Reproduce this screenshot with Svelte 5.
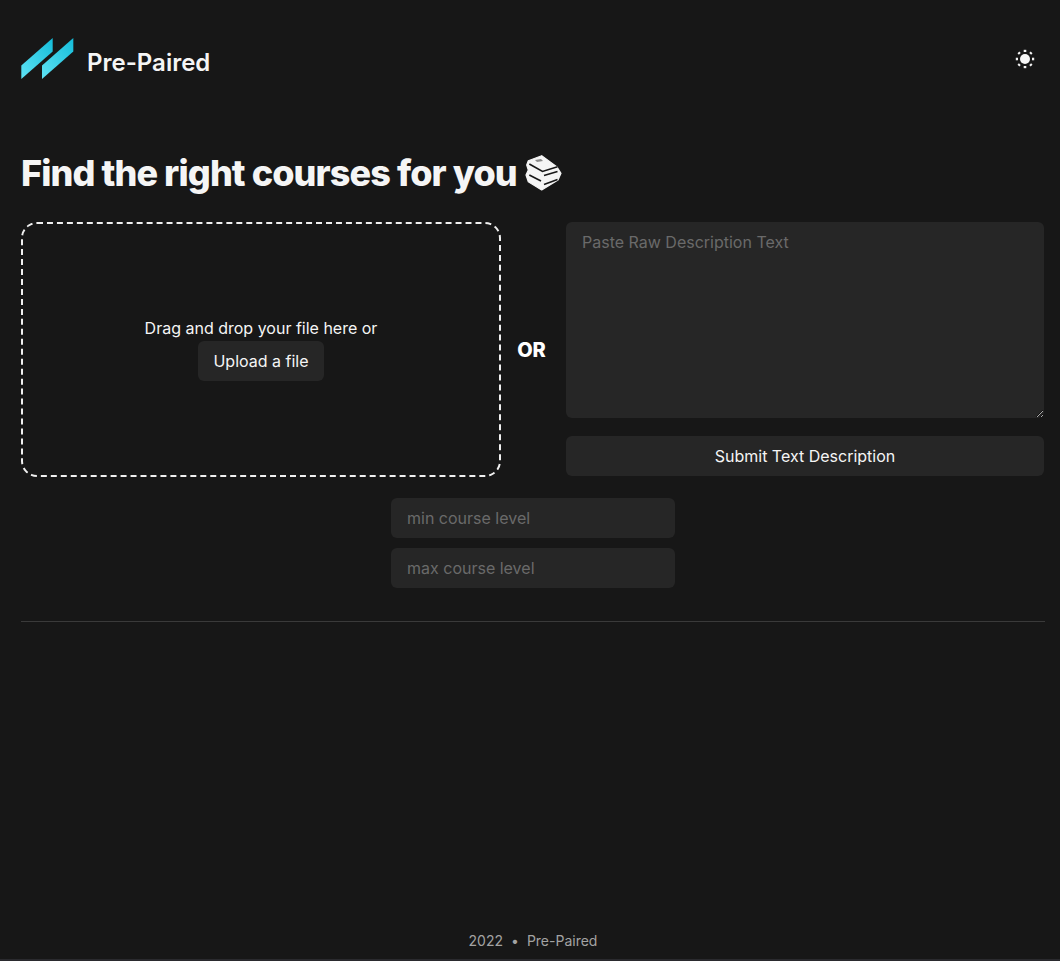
<script>
	let description = $state('');
	let minLevel = $state('');
	let maxLevel = $state('');
</script>

<div class="page">
	<header class="topbar">
		<div class="brand">
			<svg class="logo" width="53" height="42" viewBox="0 0 53 42" aria-hidden="true">
				<defs>
					<linearGradient id="logo-fill" x1="0" y1="1" x2="1" y2="0">
						<stop offset="0" stop-color="#5fe3f5" />
						<stop offset="1" stop-color="#14bcd9" />
					</linearGradient>
				</defs>
				<path d="M0.3 27.5 L31.7 0 V13.5 L0.3 41 Z" fill="url(#logo-fill)" />
				<path d="M21 27.5 L52.3 0 V13.5 L21 41 Z" fill="url(#logo-fill)" />
			</svg>
			<span class="brand-name">Pre-Paired</span>
		</div>
		<button class="theme-toggle" aria-label="Toggle color mode">
			<svg width="20" height="20" viewBox="0 0 20 20" aria-hidden="true">
				<circle cx="10" cy="10" r="5" fill="#f5f5f5" />
				<g stroke="#f5f5f5" stroke-width="2.6">
					<path d="M10 0.8 V3" />
					<path d="M10 17 V19.2" />
					<path d="M0.8 10 H3" />
					<path d="M17 10 H19.2" />
					<path d="M3.4 3.4 L4.8 4.8" />
					<path d="M15.2 15.2 L16.6 16.6" />
					<path d="M3.4 16.6 L4.8 15.2" />
					<path d="M15.2 4.8 L16.6 3.4" />
				</g>
			</svg>
		</button>
	</header>

	<main class="content">
		<h1>
			Find the right courses for you
			<svg class="books" width="36" height="36" viewBox="0 0 36 36" role="img" aria-label="books">
				<path
					d="M2.3 5.7 L15.7 0.7 L30.7 11.7 L35 18.3 L32 25 L15.7 35 L2.3 26.7 L0 20 L2.3 15 L0.7 10 Z"
					fill="#f5f5f5"
					stroke="#f5f5f5"
					stroke-width="1.2"
					stroke-linejoin="round"
				/>
				<g stroke="#171717" stroke-width="1.6" fill="none">
					<path d="M3.3 9 L16.5 16.5 L31.5 11.8" />
					<path d="M3.3 20 L15 26" />
					<path d="M18 20.5 L31.5 16.5" />
					<path d="M18 29.5 L31.5 24.5" />
				</g>
				<path d="M9 5 L15 4 L17 6 L11 7 Z" fill="#8a8a8a" />
			</svg>
		</h1>

		<div class="inputs">
			<div class="dropzone">
				<p>Drag and drop your file here or</p>
				<button class="btn upload">Upload a file</button>
			</div>
			<div class="or">OR</div>
			<div class="text-column">
				<textarea bind:value={description} placeholder="Paste Raw Description Text"></textarea>
				<button class="btn wide">Submit Text Description</button>
			</div>
		</div>

		<div class="levels">
			<input bind:value={minLevel} placeholder="min course level" />
			<input bind:value={maxLevel} placeholder="max course level" />
		</div>

		<hr />
	</main>

	<footer>
		<span>2022</span>
		<span class="dot">•</span>
		<span>Pre-Paired</span>
	</footer>
</div>

<style>
	:global(body) {
		margin: 0;
		background: #171717;
	}

	.page {
		box-sizing: border-box;
		height: 961px;
		padding: 0 15px 0 21px;
		display: flex;
		flex-direction: column;
		font-family: Inter, "Liberation Sans", sans-serif;
		color: #f5f5f5;
		background: #171717;
		border-bottom: 2px solid #2a2a2e;
	}

	.topbar {
		height: 130px;
		flex: none;
		display: flex;
		align-items: flex-start;
		justify-content: space-between;
	}

	.brand {
		display: flex;
		align-items: flex-start;
		gap: 13px;
		margin-top: 38px;
	}

	.logo {
		display: block;
	}

	.brand-name {
		margin-top: 1px;
		font-size: 24px;
		font-weight: 600;
		line-height: 48px;
	}

	.theme-toggle {
		margin: 49px 10px 0 0;
		padding: 0;
		width: 20px;
		height: 20px;
		background: none;
		border: none;
		cursor: pointer;
	}

	.theme-toggle svg {
		display: block;
	}

	.content {
		flex: 1;
	}

	h1 {
		margin: 21px 0 26px;
		font-size: 36px;
		line-height: 45px;
		font-weight: 800;
		letter-spacing: -0.9px;
		color: #f5f5f5;
		display: flex;
		align-items: center;
		gap: 9px;
	}

	.books {
		display: block;
		flex: none;
		margin-top: -1px;
		overflow: visible;
	}

	.inputs {
		display: flex;
		align-items: stretch;
		padding-right: 1px;
	}

	.dropzone {
		box-sizing: border-box;
		width: 480px;
		height: 255px;
		flex: none;
		padding-bottom: 2px;
		border: 2px dashed #f0f0f0;
		border-radius: 16px;
		display: flex;
		flex-direction: column;
		align-items: center;
		justify-content: center;
		gap: 1px;
		font-size: 16px;
	}

	.dropzone p {
		margin: 0;
		line-height: 24px;
	}

	.or {
		box-sizing: border-box;
		width: 65px;
		flex: none;
		align-self: center;
		padding-right: 4px;
		text-align: center;
		font-size: 20px;
		line-height: 24px;
		font-weight: 800;
		color: #fff;
	}

	.text-column {
		flex: 1;
		display: flex;
		flex-direction: column;
		gap: 18px;
	}

	textarea {
		box-sizing: border-box;
		display: block;
		width: 100%;
		height: 196px;
		padding: 8px 16px;
		background: #262626;
		border: none;
		border-radius: 6px;
		color: #f5f5f5;
		font: 16px/24px Inter, "Liberation Sans", sans-serif;
		outline: none;
	}

	textarea::placeholder,
	input::placeholder {
		color: #6a6a6a;
		opacity: 1;
	}

	.btn {
		height: 40px;
		padding: 0 16px;
		background: #262626;
		border: none;
		border-radius: 6px;
		color: #f5f5f5;
		font: 400 16px Inter, "Liberation Sans", sans-serif;
		cursor: pointer;
	}

	.upload {
		padding: 0 15px;
	}

	.wide {
		width: 100%;
	}

	.levels {
		width: 284px;
		margin: 21px auto 0;
		display: flex;
		flex-direction: column;
		gap: 10px;
	}

	input {
		box-sizing: border-box;
		width: 100%;
		height: 40px;
		padding: 0 16px;
		background: #262626;
		border: none;
		border-radius: 6px;
		color: #f5f5f5;
		font: 16px Inter, "Liberation Sans", sans-serif;
		outline: none;
	}

	hr {
		margin: 33px 0 0;
		border: none;
		border-top: 1px solid #3a3a3a;
	}

	footer {
		flex: none;
		height: 28px;
		display: flex;
		justify-content: center;
		align-items: flex-start;
		gap: 8px;
		font-size: 14px;
		line-height: 20px;
		color: #a3a3a3;
	}
</style>
